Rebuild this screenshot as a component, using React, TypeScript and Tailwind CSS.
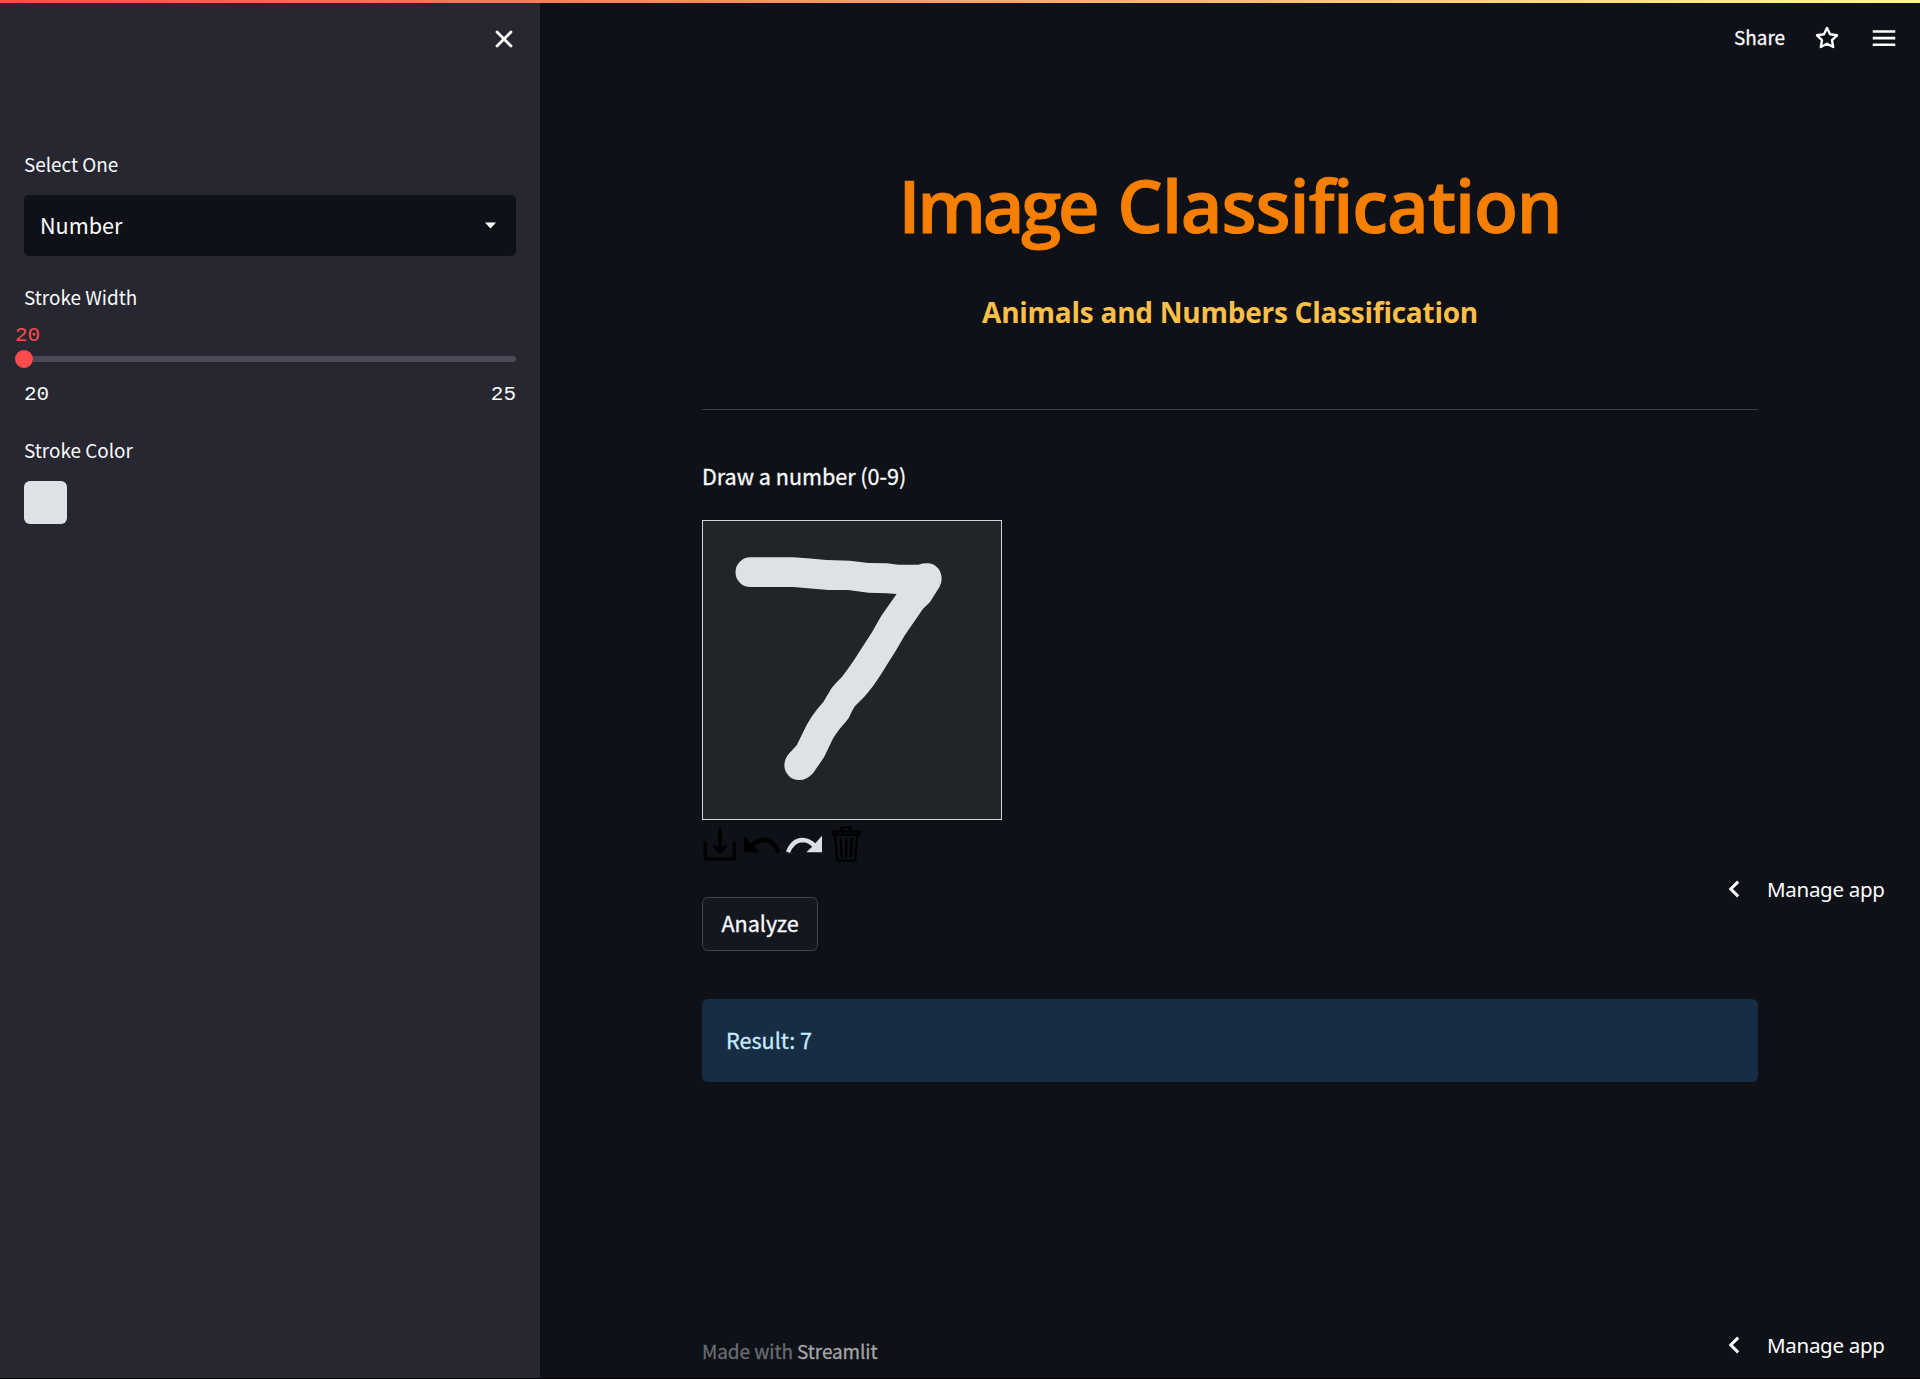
import type { ReactNode } from "react";

const ManageApp = ({ className }: { className: string }) => (
  <button
    className={`absolute right-[35.500px] flex h-7 items-center font-['Noto_Sans',sans-serif] text-[20.5px] leading-7 tracking-[-0.3px] text-white ${className}`}
  >
    <svg className="mr-[27px] h-[18px] w-3" viewBox="0 0 12 18" fill="none" stroke="currentColor" strokeWidth="3">
      <path d="M10.2 1.600 2.800 9l7.400 7.400" />
    </svg>
    Manage app
  </button>
);

const Label = ({ children }: { children: ReactNode }) => (
  <div className="h-[30px] text-[18.9px] leading-[30px] text-[#fafafa]">{children}</div>
);

function Sidebar() {
  return (
    <aside className="flex w-[540px] shrink-0 flex-col bg-[#262730] px-6">
      <div className="flex h-[149px] justify-end pt-[30px]">
        <svg className="mr-[3px] h-[18px] w-[18px]" viewBox="0 0 18 18" stroke="#fff" strokeWidth="2.8" strokeLinecap="round">
          <path d="M2 2l14 14M16 2L2 16" />
        </svg>
      </div>

      <Label>Select One</Label>
      <div className="mt-4 flex h-[61px] items-center justify-between rounded-[5px] bg-[#0e1117] pr-5 pl-4 text-[21.6px] text-white">
        <span className="pb-[1px] leading-8">Number</span>
        <svg className="h-[7px] w-[11px]" viewBox="0 0 11 7" fill="#fff">
          <path d="M0 0.5h11L6.2 5.8q-.7.7-1.4 0z" />
        </svg>
      </div>

      <div className="mt-[26px]">
        <Label>Stroke Width</Label>
      </div>
      <div className="mt-3 -ml-[9px] h-6 font-['Liberation_Mono',monospace] text-[21px] leading-6 text-[#ff4b4b]">
        20
      </div>
      <div className="mt-[2px] flex h-[18px] items-center">
        <div className="-ml-[9px] h-[18px] w-[18px] shrink-0 rounded-full bg-[#ff4b4b]" />
        <div className="h-[6px] flex-1 rounded-r-full bg-[#4b4b57]" />
      </div>
      <div className="mt-[15px] flex h-6 justify-between font-['Liberation_Mono',monospace] text-[21px] leading-6 text-[#fafafa]">
        <span>20</span>
        <span>25</span>
      </div>

      <div className="mt-7">
        <Label>Stroke Color</Label>
      </div>
      <div className="mt-4 h-[43px] w-[43px] rounded-[6px] bg-[#dee2e6]" />
    </aside>
  );
}

function DrawingCanvas() {
  return (
    <div className="h-[300px] w-[300px] border border-[#d3d3d3] bg-[#212529]">
      <svg className="h-[298px] w-[298px]" viewBox="39 393 894 894" fill="#dee2e6">
        <path d="M181 502 L310 502 Q360 506 410 510 L480 512 L535 519 L590 520 L625 524 L685 524 Q700 519 715 520 C740 522 755 543 755 567 Q755 580 748 592 L720 636 L698 658 L643 738 L620 778 L575 850 Q550 890 525 918 L495 948 L485 965 Q478 985 465 998 Q440 1025 428 1048 L402 1102 L370 1148 Q352 1170 327 1170 A44 44 0 0 1 283 1126 Q284 1106 296 1092 L320 1066 L350 1005 Q365 978 382 957 L400 936 L420 902 Q428 888 455 862 Q490 815 510 782 L545 728 L575 676 L620 612 L590 610 L535 608 L475 600 L415 600 L310 591 L181 591 A44.5 44.5 0 0 1 181 502Z" />
      </svg>
    </div>
  );
}

function CanvasToolbar() {
  return (
    <div className="mt-[6px] flex h-9 gap-[6px]">
      <svg className="h-9 w-9" viewBox="0 0 108 108" fill="none" stroke="#000" strokeWidth="10.5" strokeLinecap="round" strokeLinejoin="round">
        <path d="M54 11v64M38 62l16 15 16-15M10 52v47h87V52" />
      </svg>
      <svg className="h-9 w-9" viewBox="0 0 108 108">
        <path d="M0 29v50h47L31 64z" fill="#000" />
        <path d="M22 60Q38 42 61 42Q88 43 101 74" fill="none" stroke="#000" strokeWidth="13" strokeLinecap="round" />
      </svg>
      <svg className="h-9 w-9" viewBox="0 0 108 108">
        <path d="M108 29v50H61L77 64z" fill="#dcdee8" />
        <path d="M86 60Q70 42 49 42Q20 43 6 79" fill="none" stroke="#dcdee8" strokeWidth="13" />
      </svg>
      <svg className="h-9 w-9" viewBox="0 0 108 108" fill="none" stroke="#000" strokeWidth="7" strokeLinecap="round" strokeLinejoin="round">
        <path d="M41 15V4h26v11M15 16h79v10H15zM21 28l7 76h53l7-76M38 40l3 52M54.500 40v52M71 40l-3 52" />
      </svg>
    </div>
  );
}

export default function App() {
  return (
    <div className="relative flex h-[1379px] w-[1920px] flex-col overflow-hidden bg-[#0e1117] font-['Noto_Sans_CJK_SC',sans-serif]">
      <div className="flex min-h-0 flex-1">
        <Sidebar />
        <main className="flex flex-1 flex-col [-webkit-text-stroke:0.3px]">
          <header className="flex h-[162px] items-start justify-end pt-[23px] pr-[21px] text-[#fafafa]">
            <span className="-mt-px text-[18.9px] leading-[30px]">Share</span>
            <svg className="mt-[3px] ml-[30px] h-6 w-6" viewBox="0 0 24 24" fill="none" stroke="#fff" strokeWidth="2.4" strokeLinejoin="round">
              <path d="M12 2l3.090 6.260L22 9.270l-5 4.870 1.180 6.880L12 17.770l-6.180 3.250L7 14.140 2 9.270l6.910-1.010z" />
            </svg>
            <svg className="ml-[30px] h-[30px] w-[30px]" viewBox="0 0 24 24" fill="#fff">
              <path d="M3 5.700h18v2.100H3zM3 11h18v2.100H3zM3 16.300h18v2.100H3z" />
            </svg>
          </header>

          <div className="flex flex-1 flex-col px-[162px]">
            <h1 className="flex h-[86px] justify-center gap-[21px] font-['Open_Sans',sans-serif] text-[72px] leading-[86px] font-semibold whitespace-nowrap text-[#f77f00] [-webkit-text-stroke:1px]">
              <span className="tracking-[-3.2px]">Image</span>
              <span className="tracking-[-1.1px]">Classification</span>
            </h1>
            <h2 className="mt-11 h-10 text-center font-['Open_Sans',sans-serif] text-[28px] leading-10 font-bold tracking-[-0.25px] text-[#fcbf49] [-webkit-text-stroke:0]">
              Animals and Numbers Classification
            </h2>
            <hr className="mt-[77px] h-px border-0 bg-[#3d4045]" />
            <p className="mt-[50px] h-8 text-[21.6px] leading-8 tracking-[-0.03px] text-[#fafafa]">Draw a number (0-9)</p>
            <div className="mt-7">
              <DrawingCanvas />
            </div>
            <CanvasToolbar />
            <button className="mt-[35px] flex h-[54px] w-[116px] items-center justify-center rounded-[6px] border border-[#41434a] bg-[#131720] pb-[2px] text-[21.6px] leading-8 text-[#fafafa]">
              Analyze
            </button>
            <div className="mt-12 flex h-[83px] items-center rounded-[6px] bg-[#172d43] px-6 pb-[2px] text-[21.6px] leading-8 text-[#c7ebff]">
              Result: 7
            </div>
            <footer className="mt-auto mb-3 h-[30px] text-[18.9px] leading-[30px] tracking-[-0.05px] text-[#6a6c70]">
              Made with <span className="text-[#a2a4a7]">Streamlit</span>
            </footer>
          </div>
        </main>
      </div>
      <div className="h-px bg-black" />
      <div className="absolute inset-x-0 top-0 h-[3px] bg-[linear-gradient(90deg,#ff4b4b,#fffd80)]" />
      <ManageApp className="top-[875px]" />
      <ManageApp className="top-[1331px]" />
    </div>
  );
}
